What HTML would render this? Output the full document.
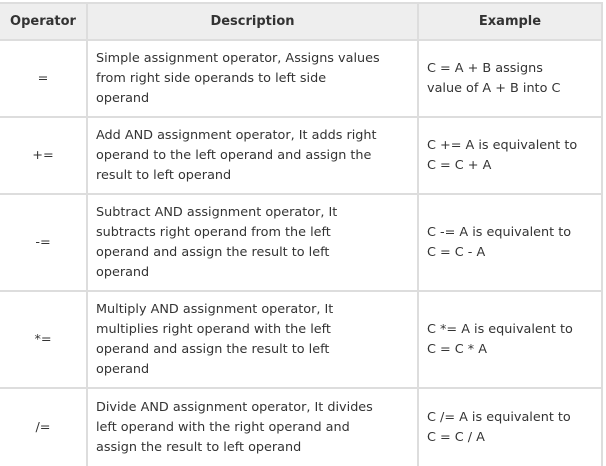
<!DOCTYPE html>
<html><head><style>
body{margin:0;width:606px;height:462px;overflow:hidden;background:#fff;font-family:"DejaVu Sans",Verdana,sans-serif;font-size:12.8px;color:#333;}
.c{position:absolute;box-sizing:border-box;border-right:2px solid #ddd;border-bottom:2px solid #ddd;display:flex;align-items:center;line-height:20px;white-space:nowrap;}
.h{background:#eee;font-weight:bold;justify-content:center;color:#333;font-size:13px;}
.o{justify-content:center;}
.d{padding-left:8px;}
.e{padding-left:8px;}
</style></head><body>
<div style="position:absolute;left:0;top:2px;width:603px;height:2px;background:#ddd"></div>
<div class="c h" style="left:0;top:4px;width:88px;height:37px">Operator</div>
<div class="c h" style="left:88px;top:4px;width:331px;height:37px">Description</div>
<div class="c h" style="left:419px;top:4px;width:184px;height:37px">Example</div>

<div class="c o" style="left:0;top:41px;width:88px;height:77px">=</div>
<div class="c d" style="left:88px;top:41px;width:331px;height:77px"><div>Simple assignment operator, Assigns values<br>from right side operands to left side<br>operand</div></div>
<div class="c e" style="left:419px;top:41px;width:184px;height:77px"><div>C = A + B assigns<br>value of A + B into C</div></div>

<div class="c o" style="left:0;top:118px;width:88px;height:77px">+=</div>
<div class="c d" style="left:88px;top:118px;width:331px;height:77px"><div>Add AND assignment operator, It adds right<br>operand to the left operand and assign the<br>result to left operand</div></div>
<div class="c e" style="left:419px;top:118px;width:184px;height:77px"><div>C += A is equivalent to<br>C = C + A</div></div>

<div class="c o" style="left:0;top:195px;width:88px;height:97px">-=</div>
<div class="c d" style="left:88px;top:195px;width:331px;height:97px"><div>Subtract AND assignment operator, It<br>subtracts right operand from the left<br>operand and assign the result to left<br>operand</div></div>
<div class="c e" style="left:419px;top:195px;width:184px;height:97px"><div>C -= A is equivalent to<br>C = C - A</div></div>

<div class="c o" style="left:0;top:292px;width:88px;height:97px">*=</div>
<div class="c d" style="left:88px;top:292px;width:331px;height:97px"><div>Multiply AND assignment operator, It<br>multiplies right operand with the left<br>operand and assign the result to left<br>operand</div></div>
<div class="c e" style="left:419px;top:292px;width:184px;height:97px"><div>C *= A is equivalent to<br>C = C * A</div></div>

<div class="c o" style="left:0;top:389px;width:88px;height:77px;border-bottom:none">/=</div>
<div class="c d" style="left:88px;top:389px;width:331px;height:77px;border-bottom:none"><div>Divide AND assignment operator, It divides<br>left operand with the right operand and<br>assign the result to left operand</div></div>
<div class="c e" style="left:419px;top:389px;width:184px;height:77px;border-bottom:none"><div>C /= A is equivalent to<br>C = C / A</div></div>
</body></html>
